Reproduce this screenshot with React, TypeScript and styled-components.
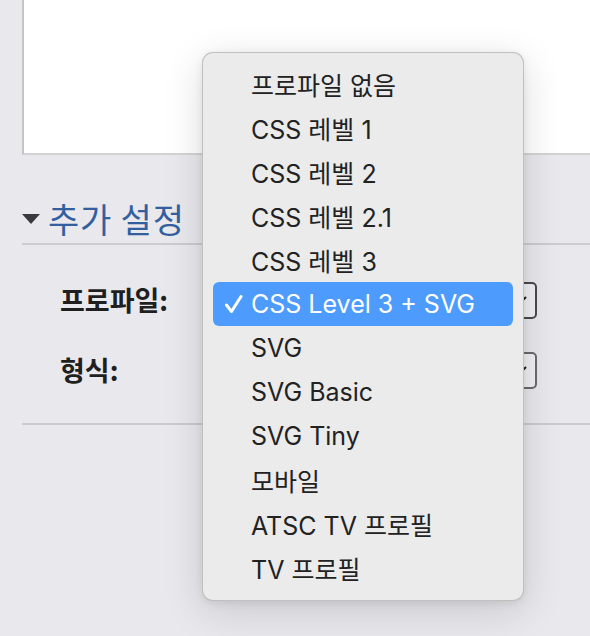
import React from "react";
import styled, { createGlobalStyle } from "styled-components";

const Global = createGlobalStyle`
  html, body {
    margin: 0;
    padding: 0;
    background: #e9e9ed;
    overflow: hidden;
  }
  body {
    font-family: Inter, "Noto Sans CJK KR", "Noto Sans", sans-serif;
  }
`;

const Page = styled.div`
  position: relative;
  width: 590px;
  height: 636px;
  padding-left: 22px;
  box-sizing: border-box;
`;

const TextBox = styled.div`
  height: 153px;
  margin-right: -10px;
  background: #ffffff;
  border-left: 2px solid #c4c4c6;
  border-bottom: 2px solid #d3d3d6;
`;

const SectionHeading = styled.div`
  display: flex;
  align-items: center;
  gap: 8px;
  height: 90px;
  padding-top: 40px;
  box-sizing: border-box;
  border-bottom: 2px solid #cbcbd0;
  margin-right: -10px;
`;

const Triangle = styled.span`
  width: 0;
  height: 0;
  border-left: 9px solid transparent;
  border-right: 9px solid transparent;
  border-top: 10px solid #3a3a3c;
`;

const HeadingText = styled.h2`
  margin: 0;
  font-family: "Noto Sans CJK KR", sans-serif;
  font-weight: 400;
  font-size: 34px;
  line-height: 40px;
  letter-spacing: 0.8px;
  color: #32609f;
`;

const Rows = styled.div`
  display: flex;
  flex-direction: column;
  gap: 32px;
  padding: 36px 0 34px;
  border-bottom: 2px solid #cbcbd0;
  margin-right: -10px;
`;

const Row = styled.div`
  display: flex;
  align-items: center;
  height: 38px;
  padding-left: 38px;
`;

const Label = styled.label`
  width: 190px;
  font-family: "Noto Sans CJK KR", sans-serif;
  font-weight: 700;
  font-size: 27px;
  line-height: 32px;
  color: #1f1f1f;
`;

const SelectBox = styled.div<{ $light?: boolean }>`
  position: relative;
  width: 287px;
  height: 37px;
  box-sizing: border-box;
  border: 2px solid ${(p) => (p.$light ? "#6b6b6d" : "#4a4a4c")};
  border-radius: 5px;
  background: #f1f1f3;
`;

const Chevron = styled.svg`
  position: absolute;
  right: 8px;
  top: 11px;
`;

const Menu = styled.ul`
  position: absolute;
  left: 202px;
  top: 52px;
  width: 322px;
  height: 549px;
  margin: 0;
  padding: 9px 10px 9px;
  box-sizing: border-box;
  list-style: none;
  background: #ebebeb;
  border: 1px solid rgba(0, 0, 0, 0.18);
  border-radius: 11px;
  box-shadow: 0 10px 40px rgba(0, 0, 0, 0.14), 0 2px 8px rgba(0, 0, 0, 0.08);
`;

const Item = styled.li<{ $selected?: boolean }>`
  position: relative;
  display: flex;
  align-items: center;
  height: 44px;
  padding-left: 38px;
  border-radius: 6px;
  font-size: 25px;
  color: ${(p) => (p.$selected ? "#ffffff" : "#222222")};
  background: ${(p) => (p.$selected ? "#4d9bfc" : "transparent")};
`;

const Check = styled.svg`
  position: absolute;
  left: 11px;
  top: 12px;
`;

const items = [
  "프로파일 없음",
  "CSS 레벨 1",
  "CSS 레벨 2",
  "CSS 레벨 2.1",
  "CSS 레벨 3",
  "CSS Level 3 + SVG",
  "SVG",
  "SVG Basic",
  "SVG Tiny",
  "모바일",
  "ATSC TV 프로필",
  "TV 프로필",
];

const SelectChevron = () => (
  <Chevron width="14" height="10" viewBox="0 0 14 10">
    <path d="M1 2 L7 8 L13 2" fill="none" stroke="#1c1c1c" strokeWidth="2" />
  </Chevron>
);

export default function App() {
  return (
    <Page>
      <Global />
      <TextBox />
      <SectionHeading>
        <Triangle />
        <HeadingText>추가 설정</HeadingText>
      </SectionHeading>
      <Rows>
        <Row>
          <Label>프로파일:</Label>
          <SelectBox>
            <SelectChevron />
          </SelectBox>
        </Row>
        <Row>
          <Label>형식:</Label>
          <SelectBox $light>
            <SelectChevron />
          </SelectBox>
        </Row>
      </Rows>
      <Menu>
        {items.map((t) => (
          <Item key={t} $selected={t === "CSS Level 3 + SVG"}>
            {t === "CSS Level 3 + SVG" && (
              <Check width="19" height="20" viewBox="0 0 19 20">
                <path
                  d="M2.5 11 L7.5 17.5 L17 2.5"
                  fill="none"
                  stroke="#ffffff"
                  strokeWidth="3"
                  strokeLinecap="round"
                  strokeLinejoin="round"
                />
              </Check>
            )}
            {t}
          </Item>
        ))}
      </Menu>
    </Page>
  );
}
